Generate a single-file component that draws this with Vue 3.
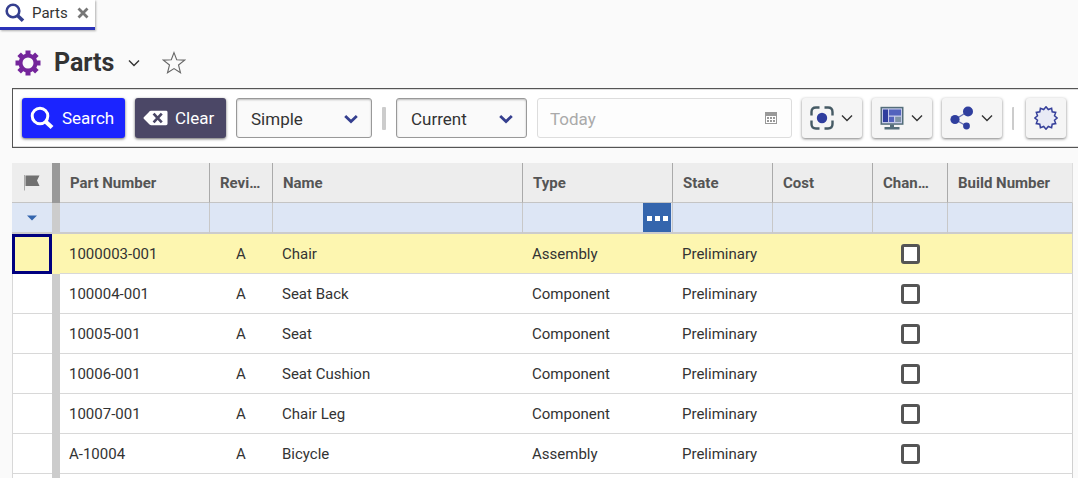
<script setup>
import { ref } from 'vue'

const rows = ref([
  { id: '1000003-001', rev: 'A', name: 'Chair', type: 'Assembly', state: 'Preliminary', changing: false },
  { id: '100004-001', rev: 'A', name: 'Seat Back', type: 'Component', state: 'Preliminary', changing: false },
  { id: '10005-001', rev: 'A', name: 'Seat', type: 'Component', state: 'Preliminary', changing: false },
  { id: '10006-001', rev: 'A', name: 'Seat Cushion', type: 'Component', state: 'Preliminary', changing: false },
  { id: '10007-001', rev: 'A', name: 'Chair Leg', type: 'Component', state: 'Preliminary', changing: false },
  { id: 'A-10004', rev: 'A', name: 'Bicycle', type: 'Assembly', state: 'Preliminary', changing: false }
])
const columns = [
  { key: 'number', label: 'Part Number' },
  { key: 'rev', label: 'Revision' },
  { key: 'name', label: 'Name' },
  { key: 'type', label: 'Type' },
  { key: 'state', label: 'State' },
  { key: 'cost', label: 'Cost' },
  { key: 'changing', label: 'Changing' },
  { key: 'build', label: 'Build Number' }
]
const selected = ref(0)
const mode = ref('Simple')
const scope = ref('Current')
const date = ref('')
</script>

<template>
  <div class="page">
    <div class="tabs">
      <div class="tab">
        <svg class="tab-icon" viewBox="0 0 20 20" aria-hidden="true">
          <circle cx="8" cy="8" r="6.3" fill="none" stroke="#353f8f" stroke-width="2.6" />
          <path d="M12.5 12.5l5.5 5.3" stroke="#353f8f" stroke-width="3.6" />
        </svg>
        <span>Parts</span>
        <button class="tab-close" aria-label="Close tab">
          <svg viewBox="0 0 12 12"><path d="M1.5 1.5l9 9M10.500 1.5l-9 9" stroke="#777" stroke-width="2.8" /></svg>
        </button>
      </div>
    </div>

    <header class="title">
      <svg class="gear" viewBox="0 0 26 26" aria-hidden="true">
        <g fill="#74259b">
          <rect x="10.5" y="0.5" width="5" height="25" />
          <rect x="10.5" y="0.5" width="5" height="25" transform="rotate(45 13 13)" />
          <rect x="10.5" y="0.5" width="5" height="25" transform="rotate(90 13 13)" />
          <rect x="10.5" y="0.5" width="5" height="25" transform="rotate(135 13 13)" />
          <circle cx="13" cy="13" r="9.5" />
        </g>
        <circle cx="13" cy="13" r="5.5" fill="#fafafa" />
      </svg>
      <h1>Parts</h1>
      <button class="plain" aria-label="Parts menu">
        <svg class="chev" viewBox="0 0 12 12"><path d="M1 3.5l5 5 5-5" fill="none" stroke="#333" stroke-width="1.4" /></svg>
      </button>
      <button class="plain fav" aria-label="Add to favorites">
        <svg class="star" viewBox="0 0 24 24"><path d="M12 1.6l2.7 7.1 7.9.4-6.1 4.9 2 7.8-6.5-4.2-6.5 4.2 2-7.8-6.1-4.9 7.9-.4z" fill="none" stroke="#666" stroke-width="1.1" /></svg>
      </button>
    </header>

    <div class="toolbar">
      <button class="btn search">
        <svg class="i24" viewBox="0 0 24 24" aria-hidden="true">
          <circle cx="10" cy="10" r="7.8" fill="none" stroke="#fff" stroke-width="3" />
          <path d="M15.5 15.5l6.5 6" stroke="#fff" stroke-width="4.2" />
        </svg>
        Search
      </button>
      <button class="btn clear">
        <svg class="clear-icon" viewBox="0 0 26 16" aria-hidden="true">
          <path d="M8.5.5H24a1.5 1.5 0 0 1 1.5 1.5v12a1.5 1.5 0 0 1-1.5 1.5H8.5Q7 15.5 6 14L.8 8.700Q.2 8 .8 7.300L6 2Q7 .5 8.5.5z" fill="#fff" />
          <path d="M11 3.500l8.500 9M19.500 3.500l-8.500 9" stroke="#4b4766" stroke-width="2.8" />
        </svg>
        Clear
      </button>
      <div class="select mode">
        <select v-model="mode" aria-label="Search mode"><option>Simple</option><option>Advanced</option></select>
        <svg viewBox="0 0 14 14" aria-hidden="true"><path d="M1.2 4l5.8 5.600L12.8 4" fill="none" stroke="#353f8f" stroke-width="2.8" /></svg>
      </div>
      <span class="sep"></span>
      <div class="select scope">
        <select v-model="scope" aria-label="Version"><option>Current</option><option>Latest</option></select>
        <svg viewBox="0 0 14 14" aria-hidden="true"><path d="M1.2 4l5.8 5.600L12.8 4" fill="none" stroke="#353f8f" stroke-width="2.8" /></svg>
      </div>
      <div class="date">
        <input v-model="date" type="text" placeholder="Today" aria-label="Effective date" disabled />
        <svg viewBox="0 0 12 12" aria-hidden="true">
          <rect x=".5" y=".5" width="11" height="11" fill="#fff" stroke="#999" />
          <path d="M0 0h12v4H0z" fill="#999" />
          <path d="M2 6h2M5 6h2M8 6h2M2 9h2M5 9h2M8 9h2" stroke="#777" stroke-width="1.6" />
        </svg>
      </div>
      <button class="btn tool" aria-label="Selection">
        <svg class="i24" viewBox="0 0 24 24">
          <path d="M1.5 9.500V6q0-4.500 4.500-4.500h3.500M14.500 1.5H18q4.500 0 4.500 4.500v3.500M22.500 14.500V18q0 4.500-4.500 4.500h-3.500M9.500 22.500H6q-4.500 0-4.500-4.500v-3.500" fill="none" stroke="#455a64" stroke-width="2.4" />
          <circle cx="12" cy="12" r="5.2" fill="#2f3e9e" />
        </svg>
        <svg class="chev" viewBox="0 0 12 12"><path d="M1 3.5l5 5 5-5" fill="none" stroke="#333" stroke-width="1.4" /></svg>
      </button>
      <button class="btn tool" aria-label="Display">
        <svg class="i24" viewBox="0 0 24 24">
          <path d="M.5.8h23v18H.5z" fill="#546e7a" />
          <path d="M2 2.300h20v15H2z" fill="#c5cae9" />
          <path d="M3 3.500h5v12.500H3z" fill="#2f3e9e" />
          <path d="M9 3.500h12v6H9zM9 10.800h5v5.200H9z" fill="#5363bd" />
          <path d="M15.2 10.800H21v5.200h-5.800z" fill="#7f94a5" />
          <path d="M10 18.500h4v2.500h5.500v2.500h-15V21H10z" fill="#546e7a" />
        </svg>
        <svg class="chev" viewBox="0 0 12 12"><path d="M1 3.5l5 5 5-5" fill="none" stroke="#333" stroke-width="1.4" /></svg>
      </button>
      <button class="btn tool" aria-label="Share">
        <svg class="i24" viewBox="0 0 24 24">
          <path d="M18 5.500L5 13.500l11.500 6.500" fill="none" stroke="#6a74b5" stroke-width="1.4" />
          <g fill="#2f3e9e"><circle cx="18" cy="5.5" r="5" /><circle cx="5" cy="13.5" r="4.6" /><circle cx="16.5" cy="20" r="3.4" /></g>
        </svg>
        <svg class="chev" viewBox="0 0 12 12"><path d="M1 3.5l5 5 5-5" fill="none" stroke="#333" stroke-width="1.4" /></svg>
      </button>
      <span class="sep thin"></span>
      <button class="btn tool badge" aria-label="Create new">
        <svg class="i24" viewBox="0 0 24 24">
          <path d="M12 .8L14.300 3.500L17.600 2.300L18.200 5.800L21.700 6.400L20.500 9.700L23.200 12L20.500 14.300L21.700 17.600L18.200 18.200L17.600 21.700L14.300 20.500L12 23.200L9.700 20.500L6.400 21.700L5.800 18.200L2.300 17.600L3.500 14.300L.8 12L3.500 9.700L2.300 6.400L5.800 5.800L6.400 2.300L9.700 3.500z" fill="#e8eaf6" stroke="#353f9a" stroke-width="1.5" />
        </svg>
      </button>
    </div>

    <div class="grid-wrap">
      <table>
        <colgroup>
          <col class="c-flag" /><col class="c-div" /><col class="c-number" /><col class="c-rev" /><col class="c-name" />
          <col class="c-type" /><col class="c-state" /><col class="c-cost" /><col class="c-changing" /><col />
        </colgroup>
        <thead>
          <tr class="head">
            <th class="flag" aria-label="Claimed">
              <svg viewBox="0 0 16 16"><path d="M.5 0v15.500" stroke="#aaa" /><path d="M1.5.5H15.500L13 5.500l2.500 5.500h-14z" fill="#717171" /></svg>
            </th>
            <td class="divider"></td>
            <th v-for="c in columns" :key="c.key">{{ c.label }}</th>
          </tr>
          <tr class="filter">
            <td class="flag">
              <button class="plain" aria-label="Filter by claim">
                <svg viewBox="0 0 10 6"><path d="M0 .5h10L5 5.500z" fill="#3465ad" /></svg>
              </button>
            </td>
            <td class="divider"></td>
            <td v-for="c in columns" :key="c.key">
              <div class="field">
                <input type="text" :aria-label="'Filter ' + c.label" />
                <button v-if="c.key === 'type'" class="more" aria-label="Choose type"><i></i><i></i><i></i></button>
              </div>
            </td>
          </tr>
        </thead>
        <tbody>
          <tr v-for="(r, i) in rows" :key="r.id" :class="{ selected: i === selected }" @click="selected = i">
            <td class="flag"></td>
            <td class="divider"></td>
            <td>{{ r.id }}</td>
            <td class="center">{{ r.rev }}</td>
            <td>{{ r.name }}</td>
            <td>{{ r.type }}</td>
            <td>{{ r.state }}</td>
            <td></td>
            <td class="center"><input v-model="r.changing" type="checkbox" :aria-label="'Changing ' + r.id" /></td>
            <td></td>
          </tr>
          <tr>
            <td class="flag"></td>
            <td class="divider"></td>
            <td colspan="8"></td>
          </tr>
        </tbody>
      </table>
    </div>
  </div>
</template>

<style>
body { margin: 0; background: #fafafa; }
</style>

<style scoped>
* { box-sizing: border-box; }
.page { height: 100vh; overflow: hidden; display: flex; flex-direction: column; font-family: Roboto, "Liberation Sans", sans-serif; font-size: 15px; color: #333; background: #fafafa; }
button, input, select { font: inherit; color: inherit; margin: 0; padding: 0; border: 0; background: none; border-radius: 0; }
svg { display: block; flex: none; }
.plain { display: flex; align-items: center; }

.tabs { display: flex; flex: none; }
.tab { display: flex; align-items: center; height: 30px; padding: 0 6px 1px 5px; background: #fff; border-bottom: 3px solid #2a32b8; box-shadow: 1px 1px 2px rgba(0, 0, 0, .3); }
.tab-icon { width: 20px; height: 20px; margin-right: 7px; }
.tab-close { margin-left: 9px; }
.tab-close svg { width: 12px; height: 12px; }

.title { display: flex; align-items: center; flex: none; height: 58px; padding: 8px 0 0 15px; }
.gear { width: 26px; height: 26px; }
h1 { margin: 0 14px 0 13px; font-size: 25px; line-height: 30px; font-weight: 700; }
.chev { width: 12px; height: 12px; }
.fav { margin-left: 22px; }
.star { width: 24px; height: 24px; }

.toolbar { display: flex; align-items: center; gap: 10px; flex: none; height: 60px; margin-left: 12px; padding: 0 12px 0 9px; background: #fff; border: 1px solid #555; border-right: 0; box-shadow: inset 0 1px #ddd, inset 0 -1px #ddd; font-size: 17px; }
.btn { display: flex; align-items: center; flex: none; height: 40px; border-radius: 3px; box-shadow: 0 1px 3px rgba(0, 0, 0, .6); }
.i24 { width: 24px; height: 24px; }
.search { gap: 8px; width: 103px; padding-left: 8px; background: #1b24ff; color: #fff; }
.clear { gap: 7px; width: 91px; padding-left: 8px; background: #4b4766; color: #fff; }
.clear-icon { width: 25px; height: 16px; }
.select { position: relative; flex: none; height: 40px; }
.mode { width: 136px; }
.scope { width: 131px; }
.select select { appearance: none; width: 100%; height: 100%; padding: 2px 14px 0; border: 1px solid #999; border-radius: 3px; background: #fafafa; box-shadow: inset 0 1px 2px rgba(0, 0, 0, .25); }
.select svg { position: absolute; right: 14px; top: 14px; width: 14px; height: 14px; pointer-events: none; }
.sep { flex: none; width: 4px; height: 23px; background: #ccc; border-radius: 1px; }
.thin { width: 4px; background: linear-gradient(90deg, #ccc 2px, transparent 2px); }
.date { display: flex; align-items: center; flex: 1; min-width: 80px; height: 40px; padding: 0 14px 0 12px; border: 1px solid #ddd; border-radius: 3px; background: #fdfdfd; }
.date input { flex: 1; min-width: 0; height: 100%; padding-top: 2px; }
.date input::placeholder { color: #aaa; opacity: 1; }
.date svg { width: 12px; height: 12px; }
.tool { gap: 7px; width: 60px; padding-left: 8px; background: #f5f5f5; box-shadow: 0 1px 3px rgba(0, 0, 0, .5); }
.badge { width: 40px; }

.grid-wrap { flex: 1; min-height: 0; overflow: hidden; margin: 15px 5px 0 12px; }
table { width: 100%; table-layout: fixed; border-collapse: separate; border-spacing: 0; background: #fff; }
.c-flag { width: 40px; }
.c-div { width: 8px; }
.c-number, .c-type { width: 150px; }
.c-rev { width: 63px; }
.c-name { width: 250px; }
.c-state, .c-cost { width: 100px; }
.c-changing { width: 75px; }
th, td { padding: 0 9px; height: 40px; overflow: hidden; text-overflow: ellipsis; white-space: nowrap; text-align: left; border-bottom: 1px solid #d8d8d8; }
td:last-child, th:last-child { border-right: 1px solid #d0d0d0; }
tbody .flag { border-left: 1px solid #d8d8d8; }
.head th { padding: 0 10px; font-weight: 700; color: #555; background: #ededed; border-right: 1px solid #aaa; border-bottom-color: #c4c4c4; }
.head th:last-child { border-right-color: #ddd; }
.head .flag, .filter .flag { padding: 0; border-right: 0; }
.flag svg { width: 16px; height: 16px; margin: 0 auto; }
.filter td { height: 31px; padding: 0; background: #dde6f5; border-right: 1px solid #c8c8c8; border-bottom: 2px solid #ccc; }
.filter .plain { width: 100%; }
.filter .flag svg { width: 10px; height: 6px; }
.field { display: flex; height: 29px; }
.field input { flex: 1; min-width: 0; padding: 0 9px; }
.more { display: flex; align-items: center; justify-content: center; gap: 3px; width: 28px; margin-right: 1px; padding-top: 1px; background: #3465ad; }
.more i { width: 5px; height: 5px; background: #fff; }
td.divider, .filter td.divider { padding: 0; background: #ccc; border: 0; }
.head td.divider { background: #999; }
.selected td { background: #fdf6b0; }
.selected .flag { box-shadow: inset 0 0 0 3px #00007f; border: 0; }
td.center { padding: 0 10px 0 9px; text-align: center; }
input[type="checkbox"] { appearance: none; display: block; width: 19px; height: 20px; margin: 0 auto; background: #fff; border: 3px solid #555; border-radius: 3px; }
input[type="checkbox"]:checked { background: #555; }
</style>
